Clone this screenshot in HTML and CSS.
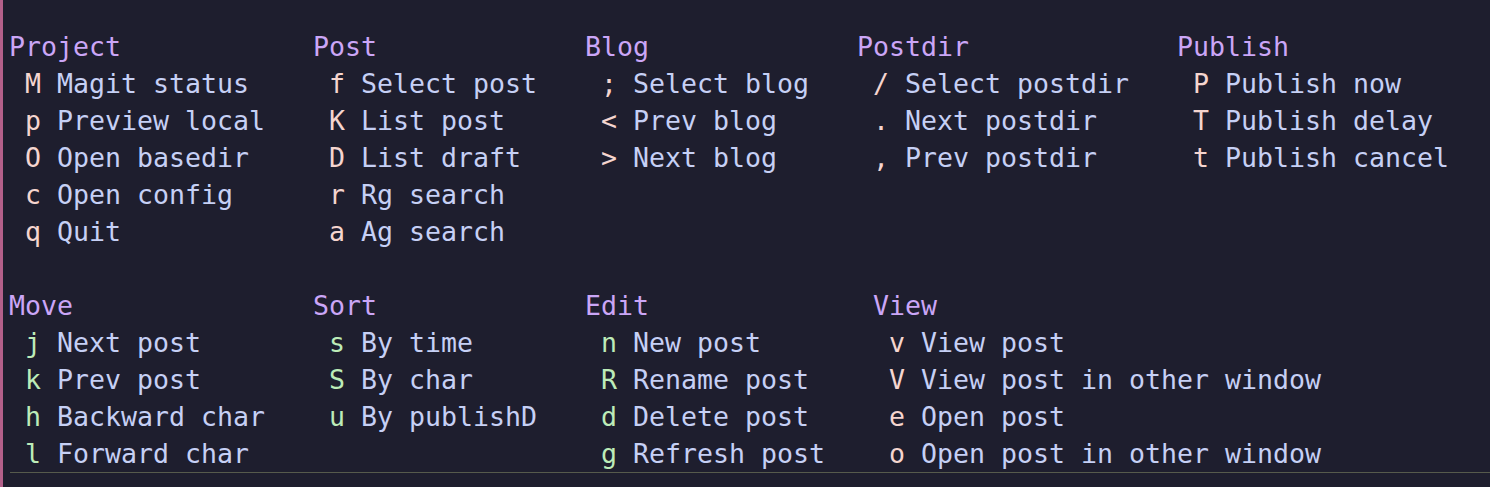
FILE: index.html
```html
<!DOCTYPE html>
<html>
<head>
<meta charset="utf-8">
<link rel="stylesheet" href="styles.css">
</head>
<body>
<div class="frame">
  <div class="hydra">
    <div class="group">
      <div class="col w19">
        <div class="head">Project</div>
        <div class="item"><span class="key">M</span>Magit status</div>
        <div class="item"><span class="key">p</span>Preview local</div>
        <div class="item"><span class="key">O</span>Open basedir</div>
        <div class="item"><span class="key">c</span>Open config</div>
        <div class="item"><span class="key">q</span>Quit</div>
      </div>
      <div class="col w17">
        <div class="head">Post</div>
        <div class="item"><span class="key">f</span>Select post</div>
        <div class="item"><span class="key">K</span>List post</div>
        <div class="item"><span class="key">D</span>List draft</div>
        <div class="item"><span class="key">r</span>Rg search</div>
        <div class="item"><span class="key">a</span>Ag search</div>
      </div>
      <div class="col w17">
        <div class="head">Blog</div>
        <div class="item"><span class="key">;</span>Select blog</div>
        <div class="item"><span class="key">&lt;</span>Prev blog</div>
        <div class="item"><span class="key">&gt;</span>Next blog</div>
      </div>
      <div class="col w20">
        <div class="head">Postdir</div>
        <div class="item"><span class="key">/</span>Select postdir</div>
        <div class="item"><span class="key">.</span>Next postdir</div>
        <div class="item"><span class="key">,</span>Prev postdir</div>
      </div>
      <div class="col">
        <div class="head">Publish</div>
        <div class="item"><span class="key">P</span>Publish now</div>
        <div class="item"><span class="key">T</span>Publish delay</div>
        <div class="item"><span class="key">t</span>Publish cancel</div>
      </div>
    </div>
    <div class="group">
      <div class="col w19">
        <div class="head">Move</div>
        <div class="item"><span class="key green">j</span>Next post</div>
        <div class="item"><span class="key green">k</span>Prev post</div>
        <div class="item"><span class="key green">h</span>Backward char</div>
        <div class="item"><span class="key green">l</span>Forward char</div>
      </div>
      <div class="col w17">
        <div class="head">Sort</div>
        <div class="item"><span class="key green">s</span>By time</div>
        <div class="item"><span class="key green">S</span>By char</div>
        <div class="item"><span class="key green">u</span>By publishD</div>
      </div>
      <div class="col w18">
        <div class="head">Edit</div>
        <div class="item"><span class="key green">n</span>New post</div>
        <div class="item"><span class="key green">R</span>Rename post</div>
        <div class="item"><span class="key green">d</span>Delete post</div>
        <div class="item"><span class="key green">g</span>Refresh post</div>
      </div>
      <div class="col">
        <div class="head">View</div>
        <div class="item"><span class="key">v</span>View post</div>
        <div class="item"><span class="key">V</span>View post in other window</div>
        <div class="item"><span class="key">e</span>Open post</div>
        <div class="item"><span class="key">o</span>Open post in other window</div>
      </div>
    </div>
  </div>
</div>
</body>
</html>
```

FILE: styles.css
```css
html, body {
  margin: 0;
  padding: 0;
  background: #1e1e2e;
  height: 100%;
  overflow: hidden;
}

.frame {
  height: 487px;
  border-left: 3px solid #b3608a;
  box-sizing: border-box;
  padding: 28px 0 0 7px;
}

.hydra {
  font-family: "DejaVu Sans Mono", "Liberation Mono", monospace;
  font-size: 26.58px;
  line-height: 37px;
  color: #c6d0f5;
  border-bottom: 1px solid #565a4c;
  display: flex;
  flex-direction: column;
  gap: 37px;
}

.group {
  display: flex;
  margin-left: -1px;
}

.col {
  display: flex;
  flex-direction: column;
  white-space: pre;
}

.w17 { width: 17ch; }
.w18 { width: 18ch; }
.w19 { width: 19ch; }
.w20 { width: 20ch; }

.head {
  color: #cba6f7;
}

.item {
  padding-left: 1ch;
}

.key {
  display: inline-block;
  width: 2ch;
  color: #f5d5cf;
}

.key.green {
  color: #bdecb8;
}
```
